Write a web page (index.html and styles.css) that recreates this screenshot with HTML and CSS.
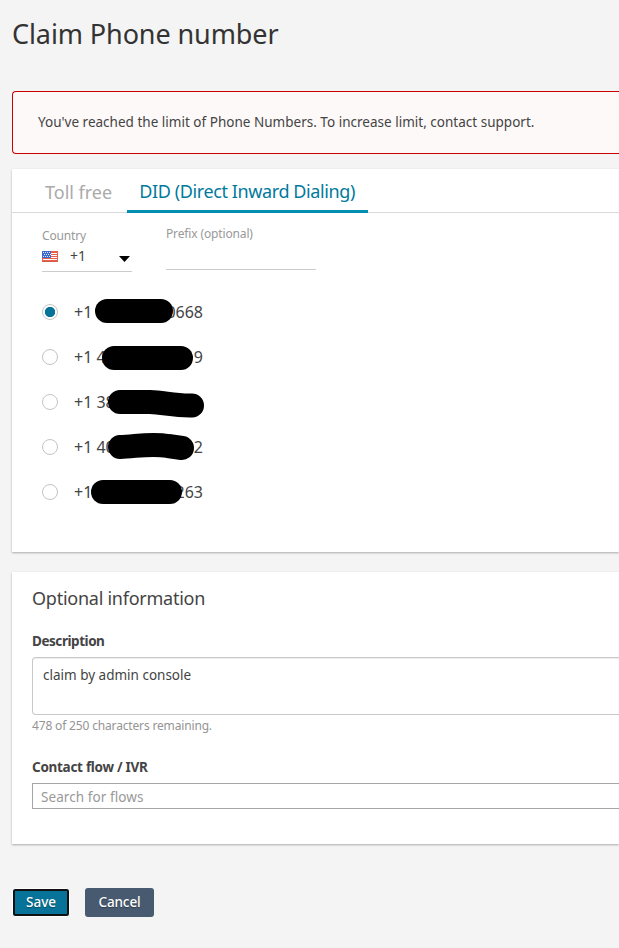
FILE: index.html
```html
<!DOCTYPE html>
<html lang="en">
<head>
<meta charset="utf-8">
<title>Claim Phone number</title>
<link rel="stylesheet" href="styles.css">
</head>
<body>
<main class="page">
  <h1 class="title">Claim Phone number</h1>
  <div class="alert">You've reached the limit of Phone Numbers. To increase limit, contact support.</div>

  <section class="card numbers">
    <nav class="tabs">
      <a class="tab">Toll free</a>
      <a class="tab active">DID (Direct Inward Dialing)</a>
    </nav>
    <div class="filters">
      <div class="country">
        <div class="filter-label country-label">Country</div>
        <div class="country-value">
          <svg class="flag" width="16" height="11" viewBox="0 0 16 11">
            <rect width="16" height="11" fill="#e8604c"/>
            <path d="M1 2.5h14M1 4.5h14M1 6.5h14M1 8.5h14" stroke="#fff"/>
            <path d="M0 10.5h16" stroke="#d65c4c"/>
            <rect width="9" height="7" fill="#3c68cc"/>
            <path d="M1 1.5h8M2 3.5h7M1 5.5h8" stroke="#dce8ff" stroke-dasharray="1 1"/>
          </svg>
          <span class="code">+1</span>
          <svg class="caret" width="11" height="6" viewBox="0 0 11 6"><path d="M0 0h11L5.5 6z" fill="#000"/></svg>
        </div>
      </div>
      <div class="prefix"><div class="filter-label prefix-label">Prefix (optional)</div></div>
    </div>
    <div class="list">
      <label class="row"><i class="radio checked"></i><span class="phone"><span>+1</span><span>0668</span></span></label>
      <label class="row"><i class="radio"></i><span class="phone"><span>+1 4</span><span>9</span></span></label>
      <label class="row"><i class="radio"></i><span class="phone"><span>+1 38</span></span></label>
      <label class="row"><i class="radio"></i><span class="phone"><span>+1 40</span><span>2</span></span></label>
      <label class="row"><i class="radio"></i><span class="phone"><span>+1</span><span>263</span></span></label>
      <svg class="masks" width="180" height="225" viewBox="30 290 180 225">
        <g fill="none" stroke="#000" stroke-width="24" stroke-linecap="round" stroke-linejoin="round">
          <path d="M107 311H161"/>
          <path d="M114 358H181"/>
          <path d="M120 402H150C164 402.500 175 406 192 405.500"/>
          <path d="M120 447C136 446.500 151 443 168 446L182 448"/>
          <path d="M103 492H170"/>
        </g>
      </svg>
    </div>
  </section>

  <section class="card optional">
    <h2 class="heading">Optional information</h2>
    <div class="label desc-label">Description</div>
    <div class="textarea">claim by admin console</div>
    <div class="hint">478 of 250 characters remaining.</div>
    <div class="label flow-label">Contact flow / IVR</div>
    <div class="search">Search for flows</div>
  </section>

  <div class="actions">
    <button class="btn save">Save</button>
    <button class="btn cancel">Cancel</button>
  </div>
</main>
</body>
</html>
```
FILE: styles.css
```css
* { box-sizing: border-box; }
body {
  margin: 0;
  width: 619px;
  height: 948px;
  overflow: hidden;
  background: #f4f4f4;
  color: #444;
  font-family: "Noto Sans", "Open Sans", sans-serif;
  font-size: 13.5px;
  white-space: nowrap;
}
.page { padding-left: 12px; }
.title { margin: 0; height: 91px; padding-top: 14px; font-size: 27px; line-height: 40px; font-weight: 400; letter-spacing: -.1px; color: #333; }
.alert { height: 63px; padding-left: 25px; border: 1px solid #c00; border-right: 0; border-radius: 4px 0 0 4px; background: #fdf9f9; line-height: 61px; letter-spacing: .013px; }
.card { background: #fff; box-shadow: 0 1px 2px rgba(0,0,0,.3); }
.numbers { margin-top: 15px; height: 383px; }
.tabs { display: flex; height: 44px; padding-left: 21px; border-bottom: 1px solid #d9d9d9; font-size: 18px; }
.tab { height: 44px; padding: 0 12px; line-height: 47px; color: #aaa; }
.tab.active { width: 241px; margin-left: 3px; line-height: 45px; letter-spacing: -.39px; color: #007a9c; border-bottom: 3px solid #008fb0; }
.filters { display: flex; padding-left: 30px; height: 76px; }
.filter-label { font-size: 12px; line-height: 16px; color: #999; letter-spacing: -.14px; }
.country { width: 90px; height: 59px; padding-top: 15px; border-bottom: 1px solid #ccc; }
.country-value { display: flex; align-items: center; height: 26px; }
.flag { margin-top: -2px; }
.code { margin: -3px 0 0 12px; width: 49px; font-size: 14px; }
.caret { margin-top: 4px; }
.prefix { width: 150px; height: 57px; margin-left: 34px; padding-top: 13px; border-bottom: 1px solid #ccc; }
.list { position: relative; padding-left: 30px; height: 225px; }
.row { display: flex; align-items: center; height: 45px; }
.radio { width: 16px; height: 16px; border: 1px solid #c4c4c4; border-radius: 50%; background: #fff; }
.radio.checked { background: radial-gradient(circle, #077398 0 4.800px, #fff 5.500px); }
.phone { display: flex; justify-content: space-between; width: 129px; margin-left: 16px; font-size: 16px; line-height: 22px; padding-top: 1px; }
.masks { position: absolute; left: 18px; top: 1px; }
.optional { margin-top: 20px; height: 272px; padding-left: 20px; }
.heading { margin: 0; padding-top: 13px; font-size: 18px; line-height: 26px; font-weight: 400; letter-spacing: -.25px; }
.label { font-weight: 700; line-height: 20px; letter-spacing: -.45px; }
.desc-label { margin-top: 20px; }
.textarea { height: 58px; margin-top: 6px; padding: 7px 10px; border: 1px solid #c8c8c8; border-right: 0; border-radius: 4px 0 0 4px; line-height: 20px; box-shadow: inset 0 1px 1px rgba(0,0,0,.07); }
.hint { margin-top: 3px; font-size: 12px; line-height: 16px; letter-spacing: -.16px; color: #949494; }
.flow-label { margin-top: 23px; letter-spacing: -.28px; }
.search { height: 26px; margin-top: 6px; padding-left: 8px; border: 1px solid #a6a6a6; border-right: 0; line-height: 26px; letter-spacing: .08px; color: #999; }
.actions { display: flex; gap: 15px; margin-top: 44px; }
.btn { height: 29px; padding: 0 0 1px; border: 0; border-radius: 3px; font: 500 13.5px "Noto Sans", sans-serif; color: #fff; text-shadow: 0 1px 1px rgba(0,0,0,.35); }
.save { width: 58px; border: 1px solid #fff; background: #077398; box-shadow: inset 0 0 0 2px #111; }
.cancel { width: 69px; background: #485a70; letter-spacing: -.1px; }
```
